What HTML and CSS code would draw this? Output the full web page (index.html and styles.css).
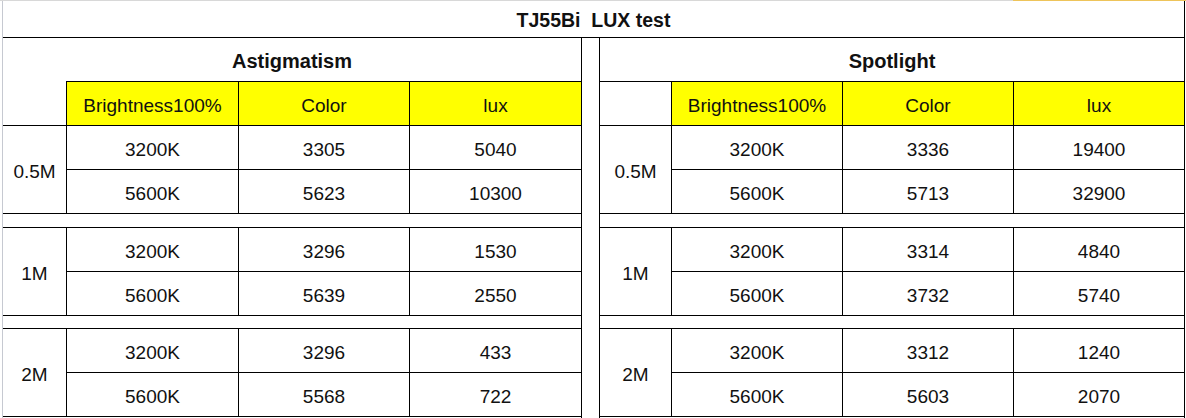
FILE: index.html
```html
<!DOCTYPE html>
<html>
<head>
<meta charset="utf-8">
<link rel="stylesheet" href="styles.css">
</head>
<body>
<div class="sheet">
  <div class="topstrip"><span class="sel"></span></div>
  <div class="body">
    <div class="title">TJ55Bi&nbsp; LUX test</div>
    <div class="panels">
      <div class="panel left">
        <div class="sec">Astigmatism</div>
        <div class="corner"></div>
        <div class="hd">Brightness100%</div>
        <div class="hd">Color</div>
        <div class="hd last">lux</div>

        <div class="dist">0.5M</div>
        <div class="v">3200K</div><div class="v">3305</div><div class="v last">5040</div>
        <div class="v">5600K</div><div class="v">5623</div><div class="v last">10300</div>
        <div class="spacer"></div>

        <div class="dist">1M</div>
        <div class="v">3200K</div><div class="v">3296</div><div class="v last">1530</div>
        <div class="v">5600K</div><div class="v">5639</div><div class="v last">2550</div>
        <div class="spacer"></div>

        <div class="dist">2M</div>
        <div class="v">3200K</div><div class="v">3296</div><div class="v last">433</div>
        <div class="v">5600K</div><div class="v">5568</div><div class="v last">722</div>
      </div>
      <div class="gutter"></div>
      <div class="panel right">
        <div class="sec">Spotlight</div>
        <div class="corner"></div>
        <div class="hd">Brightness100%</div>
        <div class="hd">Color</div>
        <div class="hd last">lux</div>

        <div class="dist">0.5M</div>
        <div class="v">3200K</div><div class="v">3336</div><div class="v last">19400</div>
        <div class="v">5600K</div><div class="v">5713</div><div class="v last">32900</div>
        <div class="spacer"></div>

        <div class="dist">1M</div>
        <div class="v">3200K</div><div class="v">3314</div><div class="v last">4840</div>
        <div class="v">5600K</div><div class="v">3732</div><div class="v last">5740</div>
        <div class="spacer"></div>

        <div class="dist">2M</div>
        <div class="v">3200K</div><div class="v">3312</div><div class="v last">1240</div>
        <div class="v">5600K</div><div class="v">5603</div><div class="v last">2070</div>
      </div>
    </div>
  </div>
</div>
</body>
</html>
```
FILE: styles.css
```css
* { box-sizing: border-box; }
html, body { margin: 0; padding: 0; background: #fff; }
body {
  font-family: "Liberation Sans", Arial, sans-serif;
  color: #111;
  font-size: 19px;
}
.sheet {
  width: 1186px;
  height: 418px;
  overflow: hidden;
}
.topstrip {
  height: 1px;
  background: #d8d8d8;
  display: flex;
  justify-content: flex-end;
}
.sel {
  width: 173px;
  background: #eec45a;
}
.body {
  margin-left: 2px;
  border-left: 1px solid #c6c9d1;
  height: 417px;
}
.title {
  width: 1182px;
  height: 37px;
  border-right: 1px solid #000;
  border-bottom: 1px solid #000;
  display: flex;
  align-items: center;
  justify-content: center;
  padding-top: 3px;
  font-weight: bold;
  font-size: 19.5px;
}
.panels {
  display: flex;
  align-items: flex-start;
}
.gutter {
  width: 17px;
  flex: none;
}
.panel {
  display: grid;
  border-right: 1px solid #000;
  padding-bottom: 2px;
  flex: none;
}
.panel.left {
  grid-template-columns: 64px 172px 171px 171px;
  grid-template-rows: 43px 45px 44px 44px 14px 44px 44px 13px 44px 44px;
}
.panel.right {
  border-left: 1px solid #000;
  grid-template-columns: 72px 171px 171px 170px;
  grid-template-rows: 44px 44px 44px 44px 14px 44px 44px 13px 44px 44px;
}
.panel > div {
  display: flex;
  align-items: center;
  justify-content: center;
  padding-top: 4px;
  white-space: nowrap;
}
.sec {
  grid-column: 1 / -1;
  font-weight: bold;
  font-size: 20px;
}
.panel.right .sec {
  border-bottom: 1px solid #000;
}
.corner {
  border-right: 1px solid #000;
  border-bottom: 1px solid #000;
}
.hd {
  background: #ffff00;
  border-right: 1px solid #000;
  border-bottom: 1px solid #000;
}
.panel.left .hd {
  border-top: 1px solid #000;
}
.dist {
  grid-row: span 2;
  border-right: 1px solid #000;
  border-bottom: 1px solid #000;
}
.v {
  border-right: 1px solid #000;
  border-bottom: 1px solid #000;
}
.panel > .last {
  border-right: none;
}
.spacer {
  grid-column: 1 / -1;
  border-bottom: 1px solid #000;
}
```
